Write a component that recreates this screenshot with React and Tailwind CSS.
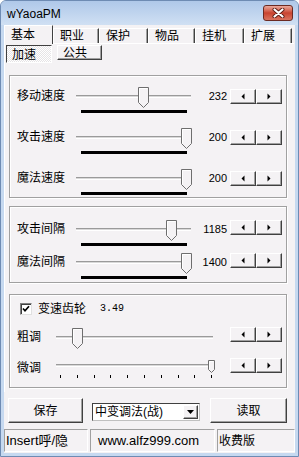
import React from 'react';

const FONT = "font-['Liberation_Sans','Noto_Sans_CJK_SC',sans-serif]";
const BG = 'bg-[#f4f2f4]';
const RAISED =
  'border border-t-white border-l-white border-r-[#404040] border-b-[#404040] shadow-[inset_-1px_-1px_0_#a0a0a0]';

const ArrowBtn = ({ dir }) => (
  <div className={`w-[26px] h-[15px] flex items-center justify-center ${BG} ${RAISED}`}>
    <svg width="4" height="7" viewBox="0 0 4 7">
      {dir === 'left' ? (
        <polygon points="3.5,0.5 3.5,6.5 0.5,3.5" fill="#000" />
      ) : (
        <polygon points="0.5,0.5 0.5,6.5 3.5,3.5" fill="#000" />
      )}
    </svg>
  </div>
);

const ArrowPair = ({ className = '' }) => (
  <div className={`flex ${className}`}>
    <ArrowBtn dir="left" />
    <ArrowBtn dir="right" />
  </div>
);

const Thumb = () => (
  <svg width="11" height="21" viewBox="0 0 11 21">
    <path d="M0.5 0.5 H10.5 V15.5 L5.5 20.5 L0.5 15.5 Z" fill="#f4f2f4" stroke="#6e6e6e" />
    <path d="M1.5 15.5 V1.5 H9.5" fill="none" stroke="#ffffff" />
  </svg>
);

const SmallThumb = () => (
  <svg width="7" height="13" viewBox="0 0 7 13">
    <path d="M0.5 0.5 H6.5 V9.5 L3.5 12.5 L0.5 9.5 Z" fill="#f4f2f4" stroke="#6e6e6e" />
    <path d="M1.5 9.5 V1.5 H5.5" fill="none" stroke="#ffffff" />
  </svg>
);

const Track = ({ w, top }) => (
  <div
    className="absolute left-0 h-[3px] border-t border-t-[#9a9a9a] border-b border-b-white bg-[#d8d8d8]"
    style={{ width: w, top }}
  />
);

const SpeedRow = ({ label, value, thumb, btnTop }) => (
  <div className="flex items-start h-[28px] pl-[7px]">
    <span className="w-[59px] mt-[2px] text-[12px] leading-[14px]">{label}</span>
    <div className="relative w-[116px] h-[28px]">
      <Track w={115} top={8} />
      <div className="absolute top-0" style={{ left: thumb }}>
        <Thumb />
      </div>
      <div className="absolute top-[23px] left-[5px] w-[106px] h-[3px] bg-black" />
    </div>
    <span className="w-[35px] mt-[2px] text-right text-[11px] leading-[14px] font-['Liberation_Sans',sans-serif]">
      {value}
    </span>
    <ArrowPair className={btnTop ? 'ml-[3px] mt-[2px]' : 'ml-[3px] mt-0'} />
  </div>
);

const Group = ({ className, children }) => (
  <div
    className={`ml-[4px] w-[278px] border border-[#a0a0a0] shadow-[1px_1px_0_#fff,inset_1px_1px_0_#fff] ${className}`}
  >
    {children}
  </div>
);

const App = () => {
  const tabs = [
    { label: '职业', w: 46 },
    { label: '保护', w: 49 },
    { label: '物品', w: 47 },
    { label: '挂机', w: 49 },
    { label: '扩展', w: 48 },
  ];
  const ticks = Array.from({ length: 10 }, (_, i) => Math.round(4 + i * 16.8));

  return (
    <div
      className={`w-[299px] h-[457px] flex flex-col bg-[#c6d9f0] border border-[#6e8bb3] rounded-t-[6px] overflow-hidden text-black ${FONT}`}
    >
      {/* title bar */}
      <div className="h-[24px] flex items-start bg-linear-to-b from-[#afc8e9] to-[#d0e0f3]">
        <span className="ml-[6px] mt-[6px] text-[12px] leading-[14px]">wYaoaPM</span>
        <div className="ml-auto mr-[5px] mt-[4px] w-[30px] h-[16px] rounded-[3px] border border-[#6b2a22] bg-linear-to-b from-[#e9a89c] via-[#c9432f] to-[#d9735f] flex items-center justify-center">
          <svg width="13" height="10" viewBox="0 0 13 10">
            <path d="M2.5 1.5 L10.5 8.5 M10.5 1.5 L2.5 8.5" stroke="#5a1c14" strokeWidth="4" strokeLinecap="round" />
            <path d="M2.5 1.5 L10.5 8.5 M10.5 1.5 L2.5 8.5" stroke="#ffffff" strokeWidth="2.2" strokeLinecap="round" />
          </svg>
        </div>
      </div>

      {/* client */}
      <div className={`mx-[3px] h-[428px] flex flex-col ${BG}`}>
        {/* tab header */}
        <div className="h-[18px] flex items-start">
          <div
            className={`relative z-10 w-[49px] h-[19px] pl-[6px] pt-[2px] text-[12px] leading-[14px] border-t border-l border-r border-t-white border-l-white border-r-[#404040] ${BG}`}
          >
            基本
          </div>
          {tabs.map((t) => (
            <div
              key={t.label}
              className={`mt-[3px] h-[15px] pl-[6px] text-[12px] leading-[14px] border-t border-l border-r border-t-white border-l-white border-r-[#404040] shadow-[inset_-1px_0_0_#a0a0a0] ${BG}`}
              style={{ width: t.w }}
            >
              {t.label}
            </div>
          ))}
        </div>

        {/* tab page */}
        <div className={`w-[290px] h-[349px] flex flex-col border-t border-l border-white ${BG}`}>
          <div className="mt-[1px] flex items-start">
            <div className="ml-[1px] w-[46px] h-[18px] pl-[5px] pt-[2px] text-[12px] leading-[14px] border border-t-[#404040] border-l-[#404040] border-r-white border-b-white bg-[image:repeating-conic-gradient(#ffffff_0_25%,#e6e4e6_0_50%)] bg-[length:2px_2px]">
              加速
            </div>
            <div className={`ml-[5px] w-[45px] h-[15px] pl-[5px] pt-[1px] text-[12px] leading-[12px] ${RAISED} ${BG}`}>
              公共
            </div>
          </div>

          <Group className="mt-[12px] h-[123px] pt-[11px] flex flex-col gap-[13px]">
            <SpeedRow label="移动速度" value="232" thumb={62} btnTop />
            <SpeedRow label="攻击速度" value="200" thumb={105} btnTop />
            <SpeedRow label="魔法速度" value="200" thumb={105} btnTop />
          </Group>

          <Group className="mt-[8px] h-[77px] pt-[13px] flex flex-col gap-[5px]">
            <SpeedRow label="攻击间隔" value="1185" thumb={90} />
            <SpeedRow label="魔法间隔" value="1400" thumb={105} />
          </Group>

          <Group className="mt-[11px] h-[94px] pt-[7px] flex flex-col">
            <div className="flex items-center h-[13px] pl-[10px]">
              <div className="w-[12px] h-[12px] bg-white border border-t-[#808080] border-l-[#808080] border-r-[#e0e0e0] border-b-[#e0e0e0] shadow-[inset_1px_1px_0_#404040] flex items-center justify-center">
                <svg width="8" height="8" viewBox="0 0 8 8">
                  <path d="M1 3.5 L3 5.8 L7 1.2" fill="none" stroke="#000" strokeWidth="1.7" />
                </svg>
              </div>
              <span className="ml-[6px] text-[12px] leading-[14px]">变速齿轮</span>
              <span className="ml-[14px] text-[10px] leading-[14px] font-['Liberation_Mono',monospace]">3.49</span>
            </div>

            <div className="mt-[12px] flex items-start h-[21px] pl-[7px]">
              <span className="w-[39px] mt-[3px] text-[12px] leading-[14px]">粗调</span>
              <div className="relative w-[157px] h-[21px]">
                <Track w={157} top={9} />
                <div className="absolute top-[1px] left-[16px]">
                  <Thumb />
                </div>
              </div>
              <ArrowPair className="ml-[17px]" />
            </div>

            <div className="mt-[10px] flex items-start h-[20px] pl-[7px]">
              <span className="w-[39px] mt-[3px] text-[12px] leading-[14px]">微调</span>
              <div className="relative w-[158px] h-[20px]">
                <Track w={158} top={6} />
                <div className="absolute top-[2px] left-[152px]">
                  <SmallThumb />
                </div>
                {ticks.map((x) => (
                  <div key={x} className="absolute top-[17px] w-px h-[3px] bg-black" style={{ left: x }} />
                ))}
              </div>
              <ArrowPair className="ml-[16px]" />
            </div>
          </Group>
        </div>

        {/* bottom buttons */}
        <div className="mt-[6px] flex items-start pl-[4px]">
          <div className={`w-[75px] h-[25px] flex items-center justify-center text-[12px] ${RAISED} ${BG}`}>保存</div>
          <div className="ml-[9px] mt-[5px] w-[108px] h-[18px] flex items-center bg-white border border-t-[#404040] border-l-[#404040] border-r-[#c0c0c0] border-b-[#c0c0c0]">
            <span className="pl-[2px] text-[12px] leading-[14px] whitespace-nowrap">中变调法(战)</span>
            <div className={`ml-auto mr-px w-[15px] h-[14px] flex items-center justify-center ${RAISED} ${BG}`}>
              <svg width="7" height="4" viewBox="0 0 7 4">
                <polygon points="0,0 7,0 3.5,4" fill="#000" />
              </svg>
            </div>
          </div>
          <div className={`ml-[10px] w-[77px] h-[25px] flex items-center justify-center text-[12px] ${RAISED} ${BG}`}>读取</div>
        </div>

        {/* status bar */}
        <div className="mt-[6px] h-[23px] flex gap-[2px]">
          <div className="w-[84px] h-full flex items-center pl-[1px] text-[13px] border border-t-[#a0a0a0] border-l-[#a0a0a0] border-r-white border-b-white">
            Insert呼/隐
          </div>
          <div className="w-[125px] h-full flex items-center pl-[7px] text-[13px] border border-t-[#a0a0a0] border-l-[#a0a0a0] border-r-white border-b-white">
            www.alfz999.com
          </div>
          <div className="w-[78px] h-full flex items-center pl-[1px] text-[12px] border border-t-[#a0a0a0] border-l-[#a0a0a0] border-r-white border-b-white">
            收费版
          </div>
        </div>
      </div>
    </div>
  );
};

export default App;
